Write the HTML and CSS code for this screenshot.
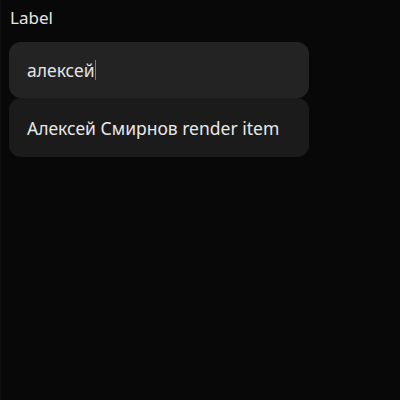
FILE: index.html
```html
<!DOCTYPE html>
<html>
<head>
<meta charset="utf-8">
<link rel="stylesheet" href="styles.css">
</head>
<body>
<div class="field">
  <div class="label">Label</div>
  <div class="combo">
    <div class="input"><span class="value">алексей</span><span class="caret"></span></div>
    <div class="item">Алексей Смирнов render item</div>
  </div>
</div>
</body>
</html>
```
FILE: styles.css
```css
html, body {
  margin: 0;
  padding: 0;
  background: #080808;
  height: 100%;
}
body {
  border-left: 1px solid #0e0e0e;
  box-sizing: border-box;
  font-family: "Noto Sans", "Open Sans", sans-serif;
  color: #e8e8e8;
}
.field {
  width: 300px;
  padding: 5px 0 0 8px;
}
.label {
  font-size: 17px;
  line-height: 25px;
  padding-left: 1px;
  color: #e6e6e6;
}
.combo {
  margin-top: 12px;
  display: flex;
  flex-direction: column;
}
.input {
  height: 56px;
  background: #232323;
  border-radius: 12px;
  display: flex;
  align-items: center;
  padding-left: 18px;
  font-size: 17.5px;
  color: #e4e4e4;
}
.caret {
  display: inline-block;
  width: 1px;
  height: 20px;
  background: #4d82e0;
  margin-left: 0;
}
.item {
  height: 59px;
  background: #1b1b1b;
  border-radius: 12px;
  display: flex;
  align-items: center;
  padding-left: 18px;
  font-size: 17.5px;
  color: #e8e8e8;
}
```
